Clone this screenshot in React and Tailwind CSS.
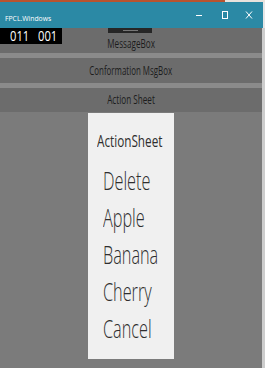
import React from 'react';

const items = ['Delete', 'Apple', 'Banana', 'Cherry', 'Cancel'];

export default function App() {
  return (
    <div className="w-[265px] h-[368px] flex flex-col overflow-hidden bg-[#7b7b7b] font-['Open_Sans','Liberation_Sans',sans-serif]">
      {/* top strip of the window behind */}
      <div className="h-[2px] flex">
        <div className="flex-1 bg-[#b9532f]" />
        <div className="w-[40px] bg-[#e9e2dc]" />
      </div>

      {/* title bar */}
      <div className="h-[26px] flex items-center bg-[#2b89a5] text-white">
        <div className="flex-1">
          <span className="ml-[5px] text-[8px] inline-block scale-x-[0.85] origin-left">FPCL.Windows</span>
        </div>
        <svg width="8" height="8" viewBox="0 0 8 8" className="mr-[18px]">
          <line x1="1" y1="4.5" x2="7" y2="4.5" stroke="white" strokeWidth="1" />
        </svg>
        <svg width="8" height="8" viewBox="0 0 8 8" className="mr-[16px]">
          <rect x="1.5" y="0.5" width="5" height="7" fill="none" stroke="white" strokeWidth="1" />
        </svg>
        <svg width="8" height="8" viewBox="0 0 8 8" className="mr-[10px]">
          <path d="M1 0.5 L7 7.5 M7 0.5 L1 7.5" stroke="white" strokeWidth="1" />
        </svg>
        <div className="w-[2px] self-stretch bg-[#e6e6e6]" />
      </div>

      {/* body */}
      <div className="flex-1 flex">
        <div className="flex-1 flex flex-col">
          {/* MessageBox row */}
          <div className="relative h-[25px] bg-[#6c6c6c] flex items-center justify-center pt-[6px]">
            <span className="text-[12px] text-[#1c1c1c] inline-block scale-x-[0.68]">MessageBox</span>
            <div className="absolute left-0 top-0 w-[62px] h-[16px] bg-black text-white text-[14px] leading-[16px] flex">
              <div className="ml-[10px] w-[32px]">
                <span className="inline-block scale-x-[0.8] origin-left">011</span>
              </div>
              <div>
                <span className="inline-block scale-x-[0.8] origin-left">001</span>
              </div>
            </div>
            <div className="absolute left-[108px] top-0 w-[44px] h-[5px] bg-[#262626] flex justify-center items-center">
              <div className="w-[15px] h-[1px] bg-[#777777]" />
            </div>
          </div>
          <div className="h-[5px] bg-[#8b8b8b]" />
          {/* Conformation row */}
          <div className="h-[25px] bg-[#6c6c6c] flex items-center justify-center">
            <span className="text-[12px] text-[#1c1c1c] inline-block scale-x-[0.66] whitespace-nowrap">Conformation MsgBox</span>
          </div>
          <div className="h-[5px] bg-[#8b8b8b]" />
          {/* Action Sheet row */}
          <div className="h-[24px] bg-[#6c6c6c] flex items-center justify-center">
            <span className="text-[12px] text-[#1c1c1c] inline-block scale-x-[0.68]">Action Sheet</span>
          </div>

          {/* popup */}
          <div className="flex justify-center pt-[1px]">
            <div className="w-[86px] h-[246px] bg-[#f0f0f0] pt-[16px] text-[#2e2e2e]">
              <div className="ml-[9px] text-[17px] leading-[24px] inline-block scale-x-[0.69] origin-left whitespace-nowrap">
                ActionSheet
              </div>
              <div className="mt-[9px] flex flex-col">
                {items.map((item) => (
                  <span
                    key={item}
                    className="ml-[15px] text-[25px] leading-[37px] font-light inline-block scale-x-[0.65] origin-left whitespace-nowrap"
                  >
                    {item}
                  </span>
                ))}
              </div>
            </div>
          </div>
        </div>
        <div className="w-[3px] bg-[#cdcdcd]" />
      </div>
    </div>
  );
}
